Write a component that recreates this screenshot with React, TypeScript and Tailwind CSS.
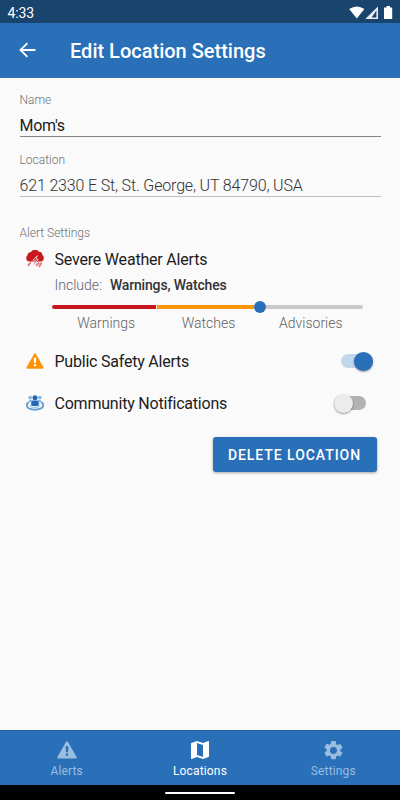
import React from "react";

function StormIcon() {
  return (
    <svg width="18" height="19" viewBox="0 0 18 19" className="shrink-0">
      <path d="M3.8 11.5A3.6 3.6 0 0 1 .2 8 3.5 3.5 0 0 1 1.6 5 3.1 3.1 0 0 1 4.8 2.2 4.9 4.9 0 0 1 13 1.8 3.5 3.5 0 0 1 16.4 5 3.4 3.4 0 0 1 17.8 8 3.5 3.5 0 0 1 14.3 11.5Z" fill="#c9171e" />
      <path d="M4.2 13 2.4 15.2M12.6 13 10.6 15.2M15.2 13.2 13.4 16.4" stroke="#e27b80" strokeWidth="1.9" strokeLinecap="round" />
      <path d="M11.4 5.6 6.8 10.2H9.4L6.6 16.4 12.4 9.2H9.9Z" fill="#c9171e" stroke="#fafafa" strokeWidth=".7" />
    </svg>
  );
}

function WarningIcon({ size, mark }: { size: number; mark: string }) {
  return (
    <svg width={size} height={size * 0.9} viewBox="0 0 20 18" className="shrink-0">
      <path d="M10 1.6 18.4 16.4H1.6Z" fill="currentColor" stroke="currentColor" strokeWidth="2.4" strokeLinejoin="round" />
      <path d="M8.6 5.2h2.8l-.4 6H9ZM8.8 12.5h2.4v2.3H8.8Z" fill={mark} />
    </svg>
  );
}

function CommunityIcon() {
  return (
    <svg width="18" height="16" viewBox="0 0 18 16" className="shrink-0">
      <path d="M2.6 7.4C-.6 9.6 .6 12.4 3.6 13.7 7 15 11 15 14.4 13.7 17.4 12.4 18.6 9.6 15.4 7.4" fill="none" stroke="#639bd2" strokeWidth="1.9" />
      <path d="M4.4 10C3.4 11.6 6 12.4 9 12.4S14.6 11.6 13.6 10" fill="none" stroke="#8bb5df" strokeWidth="1" />
      <circle cx="4.2" cy="2.6" r="1.9" fill="#8bb5df" />
      <circle cx="13.8" cy="2.6" r="1.9" fill="#8bb5df" />
      <path d="M2.6 7.4V6.2Q2.6 5 4 5H14Q15.4 5 15.4 6.2V7.4Z" fill="#8bb5df" />
      <circle cx="9" cy="2.8" r="2.5" fill="#2067b0" />
      <path d="M5.2 10.4V8Q5.2 5.9 7.3 5.9H10.7Q12.8 5.9 12.8 8V10.4Q9 11.4 5.2 10.4Z" fill="#2067b0" />
    </svg>
  );
}

function Field({ label, value, muted }: { label: string; value: string; muted?: boolean }) {
  return (
    <div className="h-[60px]">
      <div className="h-4 text-[12px] font-light leading-4 text-[#707070]">{label}</div>
      <div className={muted ? "h-[29px] border-b border-[#c0c0c0] pt-[8px] text-[16px] font-light leading-5 tracking-[-0.16px] text-[#333]" : "h-[29px] border-b border-[#858585] pt-[8px] text-[16px] font-normal leading-5 tracking-[-0.3px] text-[#1c1c1c]"}>
        {value}
      </div>
    </div>
  );
}

function Toggle({ on }: { on: boolean }) {
  return (
    <div className="flex h-5 w-[40px] items-center">
      <div className={on ? "ml-[7px] flex h-[14px] w-[32px] items-center justify-end rounded-full bg-[#c1d7eb]" : "flex h-[14px] w-[32px] items-center rounded-full bg-[#b3b3b3]"}>
        <div className={on ? "size-[19px] shrink-0 rounded-full bg-[#2970b8] shadow-[0_1px_2px_rgba(0,0,0,0.4)]" : "size-[19px] shrink-0 rounded-full bg-[#ececec] shadow-[0_1px_2px_rgba(0,0,0,0.4)]"} />
      </div>
    </div>
  );
}

export default function App() {
  return (
    <div className="flex h-[800px] w-[400px] flex-col overflow-hidden bg-[#fafafa] font-['Roboto',sans-serif]">
      <div className="flex h-[23px] shrink-0 items-center bg-[#19446d] pt-[2px] pl-[7.5px] text-[14px] leading-4 text-white">
        <span className="flex-1 tracking-[-0.1px]">4:33</span>
        <svg width="51" height="16" viewBox="0 0 51 16" fill="#fff">
          <path d="M.2 4Q7.8-1.2 15.4 4L7.8 13.6Z" />
          <path d="M29 1.5V14H16.2ZM27.4 5.6 22.6 12.4H27.4Z" fillRule="evenodd" opacity=".9" />
          <path d="M37.6 1h3.4v1.5h2.2v11.5h-8.2V2.5h2.6Z" />
        </svg>
      </div>
      <header className="flex h-[54.5px] shrink-0 items-center bg-[#2970b8] pl-[18.5px] text-white">
        <svg width="17" height="16" viewBox="0 0 17 16" fill="none" stroke="#fff" strokeWidth="1.8">
          <path d="M16.4 8H1.5M8.4 1.2 1.5 8 8.4 14.8" />
        </svg>
        <h1 className="pt-[1px] pl-[34.5px] text-[20px] font-medium leading-6">Edit Location Settings</h1>
      </header>

      <main className="flex flex-1 flex-col pt-[14.5px] pl-[19.5px] pr-[19.5px]">
        <Field label="Name" value="Mom's" />
        <Field label="Location" value="621 2330 E St, St. George, UT 84790, USA" muted />
        <div className="mt-[13px] h-4 text-[12px] font-light leading-4 text-[#707070]">Alert Settings</div>

        <section className="mt-[8px]">
          <div className="flex h-[20px] items-center pl-[6.5px]">
            <StormIcon />
            <span className="ml-[10.5px] pt-[2px] text-[16px] leading-5 tracking-[-0.2px] text-[#1c1c1c]">Severe Weather Alerts</span>
          </div>
          <div className="mt-[7px] flex h-[18px] items-center pl-[35px] text-[14px] leading-[18px]">
            <span className="font-light text-[#626367]">Include:</span>
            <span className="ml-2 font-medium tracking-[-0.18px] text-[#333]">Warnings, Watches</span>
          </div>
          <div className="mt-[7px] ml-[32.5px] flex h-3 w-[311px] items-center">
            <div className="h-1 w-[103.5px] rounded-l-full bg-[#c9171e]" />
            <div className="ml-[1px] h-1 w-[97px] bg-[#fc9608]" />
            <div className="size-3 rounded-full bg-[#2970b8]" />
            <div className="h-1 flex-1 rounded-r-full bg-[#c9c9c9]" />
          </div>
          <div className="mt-[1px] ml-[35.5px] grid w-[307px] grid-cols-3 text-center text-[14px] font-light leading-[18px] text-[#626367]">
            <span>Warnings</span>
            <span>Watches</span>
            <span>Advisories</span>
          </div>
        </section>

        <div className="mt-[19px] flex h-[20px] items-center pl-[6px] text-[#fc9608]">
          <WarningIcon size={18} mark="#fff" />
          <span className="ml-[11px] flex-1 pt-[2px] text-[16px] leading-5 tracking-[-0.22px] text-[#1c1c1c]">Public Safety Alerts</span>
          <div className="mr-[7px]"><Toggle on /></div>
        </div>
        <div className="mt-[22px] flex h-[20px] items-center pl-[6.5px]">
          <CommunityIcon />
          <span className="ml-[10.5px] flex-1 pt-[2px] text-[16px] leading-5 tracking-[-0.21px] text-[#1c1c1c]">Community Notifications</span>
          <div className="mr-[7px]"><Toggle on={false} /></div>
        </div>

        <button className="mt-[24px] mr-[4px] h-[35px] w-[164px] self-end rounded-[3px] bg-[#2970b8] text-[14px] font-medium leading-[18px] tracking-[0.95px] text-white shadow-[0_1px_3px_rgba(0,0,0,0.35)]">DELETE LOCATION</button>
      </main>

      <nav className="grid h-[55px] shrink-0 grid-cols-3 border-t border-[#165ca8] bg-[#2970b8] text-[12px] leading-4 tracking-[0.15px] text-[#9abde0]">
        <div className="flex flex-col items-center pt-[9px]">
          <div className="flex h-5 items-center"><WarningIcon size={20} mark="#2970b8" /></div>
          <span className="mt-[3px]">Alerts</span>
        </div>
        <div className="flex flex-col items-center pt-[9px] text-white">
          <div className="flex h-5 items-center">
            <svg width="18" height="18" viewBox="0 0 18 18" fill="currentColor">
              <path d="M17.5 0 12 2.1 6 0 .4 1.9Q0 2 0 2.4V17.5Q0 18 .5 18L6 15.9 12 18 17.6 16.1Q18 16 18 15.6V.5Q18 0 17.5 0ZM12 16 6 13.9V2L12 4.1Z" />
            </svg>
          </div>
          <span className="mt-[3px]">Locations</span>
        </div>
        <div className="flex flex-col items-center pt-[9px]">
          <div className="flex h-5 items-center">
            <svg width="23" height="23" viewBox="0 0 24 24" fill="currentColor">
              <path d="M19.14 12.94c.04-.3.06-.61.06-.94s-.02-.64-.07-.94l2.03-1.58a.49.49 0 0 0 .12-.61l-1.92-3.32a.49.49 0 0 0-.59-.22l-2.39.96c-.5-.38-1.03-.7-1.62-.94l-.36-2.54A.48.48 0 0 0 13.92 2h-3.84a.47.47 0 0 0-.47.41l-.36 2.54c-.59.24-1.13.57-1.62.94l-2.39-.96a.48.48 0 0 0-.59.22L2.74 8.47a.47.47 0 0 0 .12.61l2.03 1.58c-.05.3-.09.63-.09.94s.02.64.07.94l-2.03 1.58a.49.49 0 0 0-.12.61l1.92 3.32c.12.22.37.29.59.22l2.39-.96c.5.38 1.03.7 1.62.94l.36 2.54c.05.24.24.41.48.41h3.84c.24 0 .44-.17.47-.41l.36-2.54c.59-.24 1.13-.56 1.62-.94l2.39.96c.22.08.47 0 .59-.22l1.92-3.32a.47.47 0 0 0-.12-.61ZM12 15.6a3.6 3.6 0 1 1 0-7.2 3.6 3.6 0 0 1 0 7.2Z" />
            </svg>
          </div>
          <span className="mt-[3px]">Settings</span>
        </div>
      </nav>
      <div className="flex h-[15px] shrink-0 items-center justify-center bg-black">
        <div className="mt-[1px] h-[2px] w-[70px] rounded-full bg-white" />
      </div>
    </div>
  );
}
